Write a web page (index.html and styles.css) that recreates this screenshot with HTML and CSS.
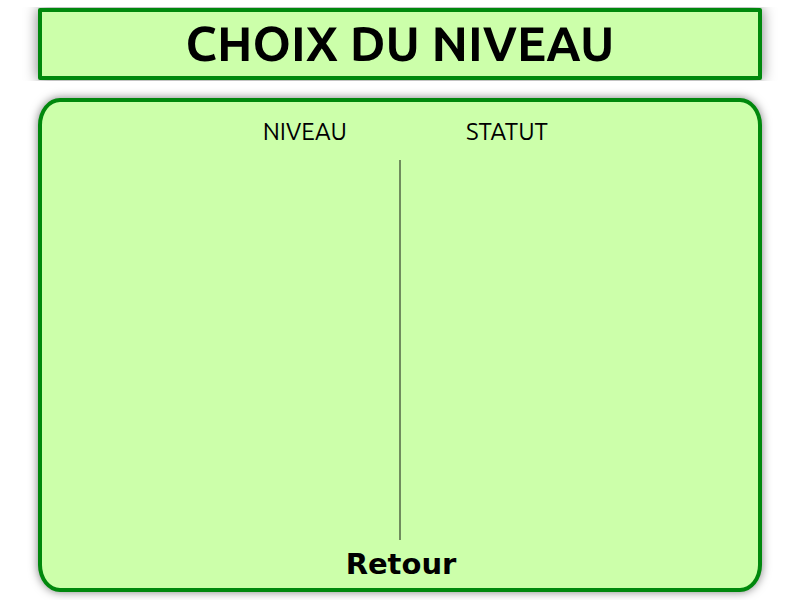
FILE: index.html
```html
<!DOCTYPE html>
<html lang="fr">
<head>
<meta charset="utf-8">
<title>Choix du niveau</title>
<link rel="stylesheet" href="styles.css">
</head>
<body>
<header class="banner"><h1>CHOIX DU NIVEAU</h1></header>
<main class="panel">
  <div class="columns">
    <section class="column column-level"><h2>NIVEAU</h2></section>
    <section class="column column-status"><h2>STATUT</h2></section>
    <div class="divider"></div>
  </div>
  <button class="back" type="button">Retour</button>
</main>
</body>
</html>
```

FILE: styles.css
```css
* { box-sizing: border-box; }

body {
  margin: 0;
  min-height: 100vh;
  padding: 8px 38px;
  display: flex;
  flex-direction: column;
  gap: 18px;
  background: #fff;
  color: #000;
  font-family: Ubuntu, "Noto Sans", sans-serif;
}

.banner,
.panel {
  border: 4px solid #00880d;
  background: #ccffaa;
}

.banner {
  padding-bottom: 2px;
  border-radius: 2px;
  box-shadow: 0 0 14px rgba(0, 0, 0, 0.5);
  clip-path: inset(-1px -20px);
  text-align: center;
}

h1 {
  margin: 0;
  font-size: 49px;
  line-height: 62px;
  font-weight: 700;
}

.panel {
  flex: 1;
  display: flex;
  flex-direction: column;
  align-items: center;
  padding: 12px 0 8px;
  border-radius: 22px / 27px;
  box-shadow: 0 0 10px rgba(0, 0, 0, 0.5);
}

.columns {
  flex: 1;
  align-self: stretch;
  display: grid;
  grid-template-columns: 1fr 1fr;
  grid-template-rows: auto 1fr;
  row-gap: 10px;
}

.column-level { text-align: right; padding-right: 53px; }
.column-status { padding-left: 66px; }

h2 {
  margin: 0;
  font-size: 24px;
  line-height: 36px;
  font-weight: 400;
}

.divider {
  grid-column: 1 / -1;
  justify-self: center;
  width: 2px;
  background: #6f8c5d;
}

.back {
  margin: 8px 0 0;
  padding: 0 0 0 2px;
  border: 0;
  background: none;
  color: inherit;
  font: 700 29px/32px "DejaVu Sans", sans-serif;
  cursor: pointer;
}
```
